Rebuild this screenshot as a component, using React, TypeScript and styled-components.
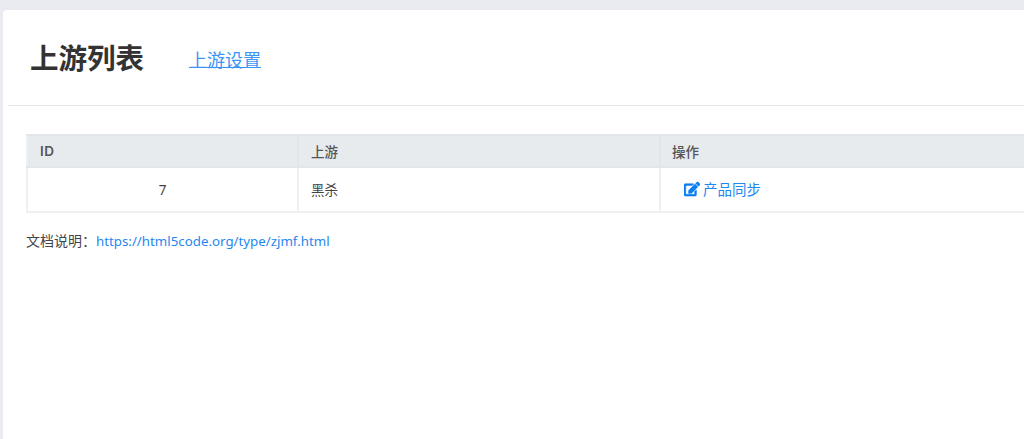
import { createGlobalStyle } from 'styled-components';
import styled from 'styled-components';
import { FaEdit } from 'react-icons/fa';

const GlobalStyle = createGlobalStyle`
  html, body {
    margin: 0;
    padding: 0;
    height: 100%;
    overflow: hidden;
    background: #e9ebf1;
  }
  body {
    font-family: "Noto Sans", "Noto Sans CJK SC", sans-serif;
  }
`;

export default function App() {
  return (
    <Page>
      <GlobalStyle />
      <Card>
        <Header>
          <Title>上游列表</Title>
          <SettingLink href="#">上游设置</SettingLink>
        </Header>
        <Body>
          <Table>
            <colgroup>
              <col width="271" />
              <col width="362" />
              <col width="400" />
            </colgroup>
            <thead>
              <tr>
                <HeadCell $strong>ID</HeadCell>
                <HeadCell>上游</HeadCell>
                <HeadCell $tight>操作</HeadCell>
              </tr>
            </thead>
            <tbody>
              <tr>
                <IdCell>7</IdCell>
                <NameCell>黑杀</NameCell>
                <ActionCell>
                  <ActionLink href="#">
                    <FaEdit size={16} />
                    产品同步
                  </ActionLink>
                </ActionCell>
              </tr>
            </tbody>
          </Table>
          <Note>
            文档说明：<NoteLink href="#">https://html5code.org/type/zjmf.html</NoteLink>
          </Note>
        </Body>
      </Card>
    </Page>
  );
}

const Page = styled.div`
  height: 439px;
  padding: 10px 0 0 3px;
  box-sizing: border-box;
  overflow: hidden;
`;

const Card = styled.div`
  height: 429px;
  background: #fff;
  border-radius: 4px 0 0 0;
  padding-left: 5px;
`;

const Header = styled.div`
  display: flex;
  align-items: center;
  height: 95px;
  padding: 0 0 0 22px;
  border-bottom: 1px solid #e7e8ee;
`;

const Title = styled.h1`
  margin: 0;
  width: 160px;
  font-size: 28.5px;
  font-weight: 700;
  color: #333;
  line-height: 32px;
`;

const SettingLink = styled.a`
  margin-left: -1px;
  font-size: 18px;
  color: #3d96f3;
  text-decoration: none;
  border-bottom: 1px solid #2f8ef2;
  line-height: 13px;
  position: relative;
  top: 3px;
`;

const Body = styled.div`
  padding: 28px 0 0 18px;
`;

const Table = styled.table`
  width: 1033px;
  table-layout: fixed;
  border-collapse: collapse;
  border: 2px solid #e9ebee;
  border-right: none;
`;

const HeadCell = styled.th<{ $strong?: boolean; $tight?: boolean }>`
  height: 32px;
  padding: 0 0 0 ${(props) => (props.$tight ? 11 : 12)}px;
  box-sizing: border-box;
  background: #e8ebee;
  border: 2px solid #e2e5e9;
  border-left: 2px solid #eff0f2;
  text-align: left;
  font-family: ${(props) => (props.$strong ? 'Inter, sans-serif' : 'inherit')};
  font-size: 13.5px;
  font-weight: ${(props) => (props.$strong ? 600 : 500)};
  letter-spacing: ${(props) => (props.$strong ? '0.6px' : '0')};
  color: #555;
`;

const Cell = styled.td`
  height: 45px;
  padding: 0 0 0 12px;
  box-sizing: border-box;
  border: 2px solid #eef0f2;
  font-size: 13.5px;
  color: #444;
`;

const IdCell = styled(Cell)`
  padding: 0;
  text-align: center;
`;

const NameCell = styled(Cell)`
  padding-bottom: 2px;
`;

const ActionCell = styled(Cell)`
  padding-left: 23px;
`;

const ActionLink = styled.a`
  display: inline-flex;
  align-items: center;
  gap: 3px;
  color: #1f87f0;
  text-decoration: none;
  font-size: 14.5px;
  svg {
    color: #0b7ff0;
    stroke: currentColor;
    stroke-width: 18;
  }
`;

const Note = styled.p`
  margin: 19px 0 0;
  font-size: 14px;
  line-height: 18px;
  color: #444;
`;

const NoteLink = styled.a`
  font-size: 13.3px;
  color: #1f87f0;
  text-decoration: none;
`;
